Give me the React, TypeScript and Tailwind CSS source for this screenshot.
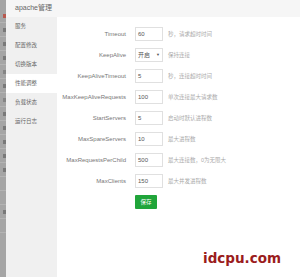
const rows = [
  { label: "Timeout", value: "60", hint: "秒，请求超时时间" },
  { label: "KeepAlive", value: "开启", hint: "保持连接", select: true },
  { label: "KeepAliveTimeout", value: "5", hint: "秒，连接超时时间" },
  { label: "MaxKeepAliveRequests", value: "100", hint: "单次连接最大请求数" },
  { label: "StartServers", value: "5", hint: "启动时默认进程数" },
  { label: "MaxSpareServers", value: "10", hint: "最大进程数" },
  { label: "MaxRequestsPerChild", value: "500", hint: "最大连接数，0为无限大" },
  { label: "MaxClients", value: "150", hint: "最大并发进程数" }
];

const menu = ["服务", "配置修改", "切换版本", "性能调整", "负载状态", "运行日志"];

// dimmed page behind the dialog, only its right edge shows
const strip = ["#c0392b", "#666", "#666", "#666", "#777", "#666", "#777", "#666", "#666", "#666", "#666", "#666", "", "", "#666", ""];

export default function App() {
  return (
    <div className="relative flex h-[277px] w-[300px] overflow-hidden bg-white font-['Liberation_Sans','Noto_Sans_CJK_SC',sans-serif]">
      <div className="flex w-[6px] shrink-0 flex-col bg-[#a5a5a5] pt-[9px]">
        {strip.map((c, i) => (
          <div key={i} className="flex h-[14px] shrink-0 items-center justify-end border-b border-[#b3b3b3]">
            {c ? <div className="h-[4px] w-[3px] opacity-70" style={{ backgroundColor: c }} /> : null}
          </div>
        ))}
      </div>

      <div className="flex flex-1 flex-col">
        <div className="flex h-[17px] items-center bg-[#f6f6f6] pl-[9px] text-[7px] text-[#666]">apache管理</div>

        <div className="flex flex-1">
          <nav className="w-[51px] shrink-0 bg-[#f0f0f0]">
            {menu.map((m) => (
              <div
                key={m}
                className={`flex h-[19px] items-center pl-[9px] text-[5.5px] text-[#666] ${m === "性能调整" ? "bg-white" : ""}`}
              >
                {m}
              </div>
            ))}
          </nav>

          <div className="flex flex-1 flex-col gap-[7px] pt-[10px]">
            {rows.map((r) => (
              <div key={r.label} className="flex h-[14px] items-center">
                <div className="w-[78px] pr-[9px] text-right text-[6px] text-[#777]">{r.label}</div>
                <div className="flex h-[14px] w-[28px] items-center justify-between border border-[#e0e0e0] px-[2px] text-[6px] text-[#555]">
                  <span>{r.value}</span>
                  {r.select ? <span className="text-[4px]">▼</span> : null}
                </div>
                <div className="pl-[5px] text-[5.5px] text-[#aaa]">{r.hint}</div>
              </div>
            ))}
            <div className="flex pl-[78px]">
              <button className="flex h-[14px] w-[22px] items-center justify-center rounded-[1px] bg-[#20a53a] text-[5.5px] text-white">
                保存
              </button>
            </div>
          </div>
        </div>
      </div>

      <div className="absolute left-[203px] top-[248px] font-['DejaVu_Sans',sans-serif] text-[13.5px] font-bold text-[#9b1c1c]">
        idcpu.com
      </div>
    </div>
  );
}
